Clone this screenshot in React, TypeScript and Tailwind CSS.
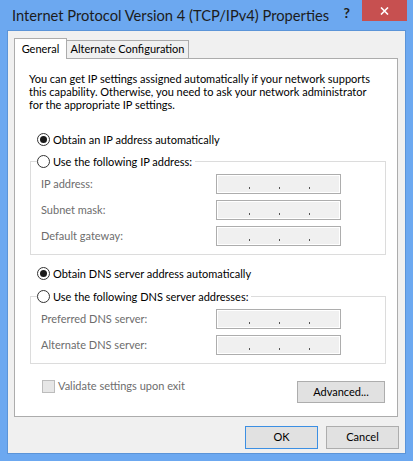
function Radio({ checked, label }: { checked?: boolean; label: string }) {
  return (
    <div className="flex items-center h-[13px]">
      <span className="w-[13px] h-[13px] rounded-full border border-[#333] bg-white flex items-center justify-center shrink-0">
        {checked && <span className="w-[7px] h-[7px] rounded-full bg-[#1a1a1a]" />}
      </span>
      <span className="ml-[3px] whitespace-nowrap leading-[13px]">{label}</span>
    </div>
  );
}

function IpBox() {
  return (
    <div className="w-[125px] h-[20px] border border-[#adadad] bg-[#f0f0f0] shadow-[inset_0_0_0_1px_#fff] flex items-start pl-[32px] pt-[12px] gap-[29px]">
      <span className="w-px h-[2px] bg-[#555]" />
      <span className="w-px h-[2px] bg-[#555]" />
      <span className="w-px h-[2px] bg-[#555]" />
    </div>
  );
}

function Field({ label }: { label: string }) {
  return (
    <div className="flex items-center h-[20px] ml-[10px]">
      <span className="w-[175px] text-[#6d6d6d] whitespace-nowrap">{label}</span>
      <IpBox />
    </div>
  );
}

export default function App() {
  return (
    <div className="w-[413px] h-[461px] bg-[#6ca8f0] flex flex-col font-['Lato',sans-serif] text-[11px] text-black">
      {/* title bar */}
      <div className="h-[30px] flex items-start shrink-0">
        <div className="ml-[12px] mt-[5px] text-[14.7px] leading-[20px] text-[#1c1c1c] whitespace-nowrap">
          Internet Protocol Version 4 (TCP/IPv4) Properties
        </div>
        <div className="ml-auto mt-[5px] text-[14px] font-bold leading-[16px] text-[#222]">?</div>
        <div className="ml-[12px] mr-[6px] w-[45px] h-[21px] bg-[#c75050] flex items-center justify-center">
          <svg width="9" height="8" viewBox="0 0 9 8">
            <path d="M1 0.5 L8 7.5 M8 0.5 L1 7.5" stroke="#fff" strokeWidth="1.6" />
          </svg>
        </div>
      </div>

      {/* client area */}
      <div className="mx-[7px] mb-[7px] flex-1 border border-[#5b94d8] bg-[#f0f0f0] flex flex-col">
        <div className="ml-[6px] mt-[7px] flex items-end h-[20px]">
          <div className="relative z-10 h-[21px] -mb-px w-[53px] border border-b-0 border-[#acacac] bg-white flex items-center justify-center">
            General
          </div>
          <div className="h-[18px] w-[123px] -ml-px border border-b-0 border-[#acacac] bg-[#f0f0f0] flex items-center justify-center whitespace-nowrap">
            Alternate Configuration
          </div>
        </div>

        <div className="ml-[6px] w-[384px] h-[359px] border border-[#acacac] bg-white flex flex-col">
          <div className="ml-[14px] mt-[13px] leading-[13px] whitespace-nowrap">
            <div>You can get IP settings assigned automatically if your network supports</div>
            <div>this capability. Otherwise, you need to ask your network administrator</div>
            <div>for the appropriate IP settings.</div>
          </div>

          <div className="ml-[22px] mt-[22px]">
            <Radio checked label="Obtain an IP address automatically" />
          </div>

          <fieldset className="ml-[15px] mt-[9px] w-[356px] border border-[#dcdcdc] pb-[8px]">
            <legend className="ml-[6px] pr-[3px]">
              <Radio label="Use the following IP address:" />
            </legend>
            <div className="mt-[6px] flex flex-col gap-[6px]">
              <Field label="IP address:" />
              <Field label="Subnet mask:" />
              <Field label="Default gateway:" />
            </div>
          </fieldset>

          <div className="ml-[22px] mt-[12px]">
            <Radio checked label="Obtain DNS server address automatically" />
          </div>

          <fieldset className="ml-[15px] mt-[10px] w-[356px] border border-[#dcdcdc] pb-[8px]">
            <legend className="ml-[6px] pr-[3px]">
              <Radio label="Use the following DNS server addresses:" />
            </legend>
            <div className="mt-[6px] flex flex-col gap-[6px]">
              <Field label="Preferred DNS server:" />
              <Field label="Alternate DNS server:" />
            </div>
          </fieldset>

          <div className="mt-[16px] flex items-start">
            <div className="ml-[27px] flex items-center h-[13px]">
              <span className="w-[13px] h-[13px] border border-[#bcbcbc] bg-[#e6e6e6]" />
              <span className="ml-[3px] text-[#6d6d6d] whitespace-nowrap">Validate settings upon exit</span>
            </div>
            <button className="ml-auto mr-[12px] mt-[1px] w-[88px] h-[22px] border border-[#adadad] bg-[#e1e1e1] flex items-center justify-center">
              Advanced...
            </button>
          </div>
        </div>

        <div className="mt-[9px] mr-[6px] flex justify-end gap-[8px]">
          <button className="w-[73px] h-[23px] border border-[#3c8fe3] bg-[#e1e1e1] flex items-center justify-center">
            OK
          </button>
          <button className="w-[73px] h-[23px] border border-[#adadad] bg-[#e1e1e1] flex items-center justify-center">
            Cancel
          </button>
        </div>
      </div>
    </div>
  );
}
